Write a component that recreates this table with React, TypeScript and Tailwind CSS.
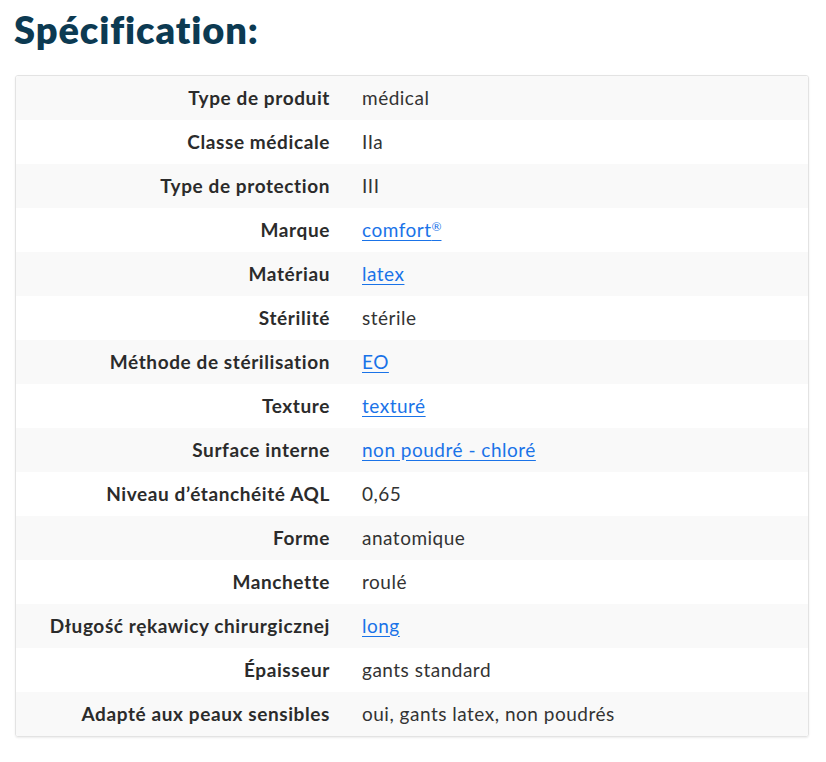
import React from 'react';

type Row = { label: string; value: string; link?: boolean; sup?: string };

const rows: Row[] = [
  { label: 'Type de produit', value: 'médical' },
  { label: 'Classe médicale', value: 'IIa' },
  { label: 'Type de protection', value: 'III' },
  { label: 'Marque', value: 'comfort', sup: '®', link: true },
  { label: 'Matériau', value: 'latex', link: true },
  { label: 'Stérilité', value: 'stérile' },
  { label: 'Méthode de stérilisation', value: 'EO', link: true },
  { label: 'Texture', value: 'texturé', link: true },
  { label: 'Surface interne', value: 'non poudré - chloré', link: true },
  { label: 'Niveau d’étanchéité AQL', value: '0,65' },
  { label: 'Forme', value: 'anatomique' },
  { label: 'Manchette', value: 'roulé' },
  { label: 'Długość rękawicy chirurgicznej', value: 'long', link: true },
  { label: 'Épaisseur', value: 'gants standard' },
  { label: 'Adapté aux peaux sensibles', value: 'oui, gants latex, non poudrés' },
];

export default function App() {
  return (
    <div className="min-h-[762px] bg-white px-[14px] pt-[6px] font-['Lato',sans-serif] text-[#333]">
      <h2 className="text-[38px] font-extrabold leading-[46px] tracking-[0.9px] text-[#0c3a52]">Spécification:</h2>
      <div className="ml-px mt-[23px] w-[794px] rounded-[3px] border border-[#e3e3e3] shadow-[0_1px_2px_rgba(0,0,0,0.08)] overflow-hidden">
        {rows.map((r, i) => (
          <div key={r.label} className={`flex h-[44px] items-center text-[19px] ${i % 2 === 0 ? 'bg-[#f9f9f9]' : 'bg-white'}`}>
            <div className="w-[330px] shrink-0 pr-[16px] text-right font-bold tracking-[0.6px] text-[#2b2b2b]">{r.label}</div>
            <div className="pl-[16px] tracking-[0.5px]">
              {r.link ? (
                <a href="#" className="text-[#1a73e8] underline underline-offset-[3px]">
                  {r.value}
                  {r.sup && <sup className="text-[12px] tracking-normal">{r.sup}</sup>}
                </a>
              ) : (
                <span>{r.value}</span>
              )}
            </div>
          </div>
        ))}
      </div>
    </div>
  );
}
